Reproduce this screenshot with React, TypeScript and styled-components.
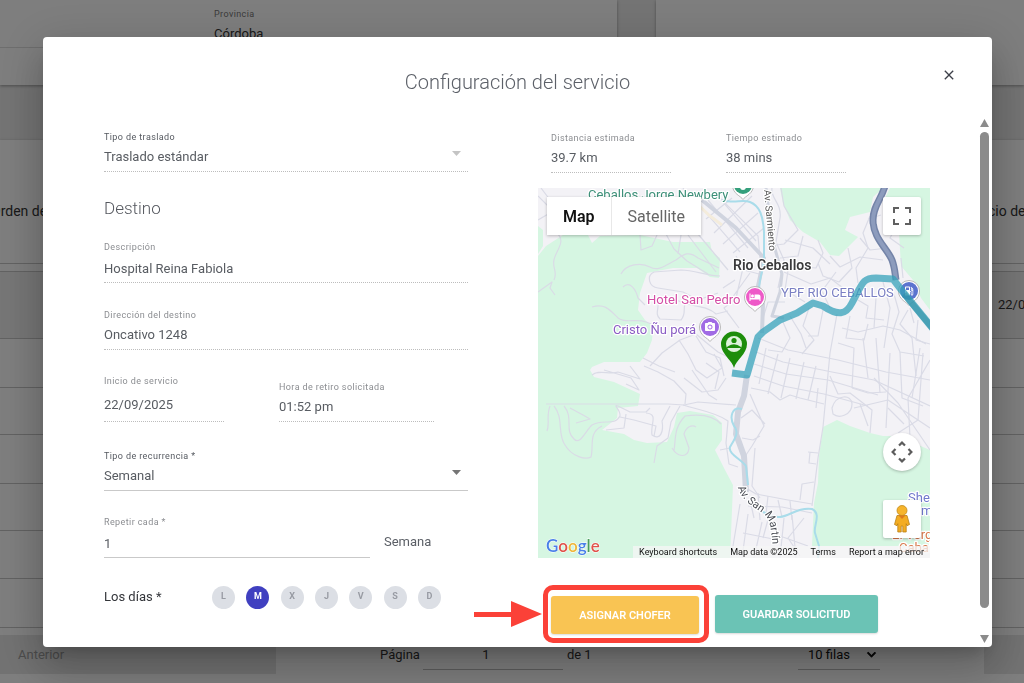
import React from "react";
import styled, { createGlobalStyle, css } from "styled-components";
import { MdClose, MdHotel, MdPhotoCamera, MdLocalGasStation, MdKeyboardArrowDown } from "react-icons/md";

const GlobalStyle = createGlobalStyle`
  *, *::before, *::after { box-sizing: border-box; }
  html, body { margin: 0; padding: 0; }
  body {
    font-family: Roboto, "Liberation Sans", sans-serif;
    font-size: 13px;
    color: #5b5f66;
    background: #e8e8e8;
    overflow: hidden;
  }
  button, input, select { font: inherit; color: inherit; }
`;

/* ---------- page behind the dialog ---------- */

const Page = styled.main`
  display: flex;
  flex-direction: column;
  min-height: 100vh;
  overflow: hidden;
`;

const TopCards = styled.section`
  display: grid;
  grid-template-columns: 617fr 368fr;
  gap: 39px;
  height: 85px;
`;

const Card = styled.div`
  background: #fdfdfd;
  box-shadow: 0 1px 3px rgba(0, 0, 0, 0.35);
`;

const ProvinceCard = styled(Card)`
  padding: 8px 0 0 214px;
  background: linear-gradient(#fdfdfd 47px, #dcdcdc 47px, #dcdcdc 48px, #fdfdfd 48px);
`;

const ProvinceLabel = styled.div`
  font-size: 9px;
  line-height: 12px;
  letter-spacing: 0.4px;
  color: #777;
`;

const ProvinceValue = styled.div`
  margin-top: 4px;
  font-size: 13px;
  line-height: 20px;
  color: #333;
`;

const TableCard = styled(Card)`
  margin-top: 55px;
  flex: 1;
`;

const Orders = styled.table`
  width: calc(100% + 9px);
  margin-left: -9px;
  table-layout: fixed;
  border-collapse: collapse;
  font-size: 14px;
  color: #333;

  th, td {
    padding: 0;
    font-weight: 400;
    text-align: left;
    white-space: nowrap;
    overflow: hidden;
    border-bottom: 1px solid #c4c4c4;
  }
  th { height: 123px; padding-top: 20px; }
  th:last-child { width: 51px; }
  td:last-child { padding-left: 25px; font-size: 13px; }
`;

const OrderRow = styled.tr<{ $h: number; $tint?: boolean }>`
  height: ${(p) => p.$h}px;
  background: ${(p) => (p.$tint ? "#ededed" : "transparent")};
`;

const Pager = styled.footer`
  display: flex;
  align-items: center;
  height: 39px;
  margin: 7px 0 9px;
  font-size: 13px;
  color: #333;
`;

const PagerButton = styled.button<{ $w: number }>`
  width: ${(p) => p.$w}px;
  flex: none;
  height: 39px;
  padding: 0 18px;
  border: 0;
  text-align: left;
  background: #e4e4e4;
  color: #999;
  white-space: nowrap;
  overflow: hidden;
`;

const PagerCenter = styled.div`
  flex: 1;
  display: flex;
  align-items: center;
  padding: 1px 104px 0;
`;

const PagerInput = styled.input`
  width: 140px;
  height: 30px;
  margin: 0 4px 0 3px;
  padding: 0 14px 0 0;
  text-align: center;
  border: 0;
  border-bottom: 1px solid #bbb;
  background: transparent;
`;

const PagerSize = styled.label`
  display: flex;
  align-items: center;
  width: 82px;
  height: 30px;
  margin-left: auto;
  padding-left: 10px;
  border-bottom: 1px solid #bbb;
  color: #111;

  select {
    appearance: none;
    flex: 1;
    min-width: 0;
    padding: 0;
    border: 0;
    background: transparent;
  }
  svg { flex: none; }
  path:last-child { stroke: #000; stroke-width: 1; }
`;

/* ---------- dialog ---------- */

const Backdrop = styled.div`
  position: fixed;
  inset: 0;
  display: flex;
  padding: 37px 32px 36px 43px;
  background: rgba(0, 0, 0, 0.5);
`;

const Dialog = styled.section`
  flex: 1;
  min-width: 0;
  display: flex;
  flex-direction: column;
  background: #fff;
  border-radius: 4px;
  box-shadow: 0 11px 15px -7px rgba(0, 0, 0, 0.2), 0 24px 38px 3px rgba(0, 0, 0, 0.14),
    0 9px 46px 8px rgba(0, 0, 0, 0.12);
`;

const DialogHeader = styled.header`
  display: grid;
  grid-template-columns: 60px 1fr 60px;
  height: 81px;
  padding-top: 26px;
`;

const DialogTitle = styled.h1`
  grid-column: 2;
  margin: 5px 0 0;
  font-size: 20px;
  font-weight: 300;
  line-height: 28px;
  text-align: center;
  color: #5c6068;
`;

const CloseButton = styled.button`
  width: 24px;
  height: 24px;
  margin-left: 5px;
  padding: 4px;
  border: 0;
  background: transparent;
  color: #3d4049;
  font-size: 16px;
  line-height: 0;
`;

const DialogBody = styled.div`
  flex: 1;
  min-height: 0;
  display: flex;
`;

const Form = styled.form`
  flex: 1;
  min-width: 0;
  display: grid;
  grid-template-columns: minmax(0, 364fr) minmax(0, 392fr);
  gap: 70px;
  padding: 13px 47px 0 61px;
`;

const Column = styled.div<{ $top?: number }>`
  display: flex;
  flex-direction: column;
  padding-top: ${(p) => p.$top ?? 0}px;
`;

const ScrollTrack = styled.div`
  flex: none;
  width: 15px;
  display: flex;
  flex-direction: column;
  align-items: center;
  gap: 5px;
  padding: 1px 0 4px;
  color: #8b8b8b;
`;

const ScrollThumb = styled.div`
  width: 9px;
  flex: 1;
  margin-bottom: 22px;
  border-radius: 5px;
  background: #8b8b8b;
`;

const Field = styled.div<{ $gap?: number; $pad?: number; $w?: string; $solid?: boolean }>`
  display: flex;
  flex-direction: column;
  gap: ${(p) => p.$gap ?? 4}px;
  width: ${(p) => p.$w ?? "auto"};
  padding-bottom: ${(p) => p.$pad ?? 4}px;
  border-bottom: 1px ${(p) => (p.$solid ? "solid #c9c9c9" : "dotted #bdbdbd")};
`;

const FieldLabel = styled.label<{ $strong?: boolean }>`
  font-size: 9px;
  line-height: 12px;
  letter-spacing: 0.4px;
  white-space: nowrap;
  color: ${(p) => (p.$strong ? "#555960" : "#8b8d91")};
`;

const control = css`
  width: 100%;
  min-width: 0;
  height: 20px;
  padding: 0;
  border: 0;
  outline: 0;
  background: transparent;
  font-size: 13px;
  line-height: 20px;
  color: #585c62;
`;

const TextInput = styled.input`
  ${control}
`;

const SelectBox = styled.div<{ $muted?: boolean }>`
  display: flex;
  align-items: center;
  padding-right: 7px;
  color: ${(p) => (p.$muted ? "#c4c4c4" : "#757575")};

  select { ${control} appearance: none; opacity: 1; }
  svg { flex: none; margin-bottom: 7px; }
`;

const SectionTitle = styled.h2`
  margin: 24px 0 21px;
  font-size: 17px;
  font-weight: 300;
  line-height: 24px;
  color: #55585f;
`;

const Split = styled.div<{ $gap: number; $top: number }>`
  display: flex;
  align-items: flex-end;
  gap: ${(p) => p.$gap}px;
  margin-top: ${(p) => p.$top}px;
`;

const Spaced = styled.div<{ $top: number }>`
  margin-top: ${(p) => p.$top}px;
`;

const Unit = styled.span`
  height: 26px;
  line-height: 20px;
`;

const Days = styled.fieldset`
  display: flex;
  align-items: center;
  margin: 27px 0 0;
  padding: 0;
  border: 0;
`;

const DaysTitle = styled.span`
  width: 108px;
  flex: none;
  line-height: 24px;
  color: #33353a;
`;

const DayList = styled.div`
  display: flex;
  justify-content: space-between;
  width: 229px;
`;

const Day = styled.button<{ $on?: boolean }>`
  width: 23px;
  height: 23px;
  padding: 0 0 2px;
  border: 0;
  border-radius: 50%;
  font-size: 9px;
  font-weight: 700;
  line-height: 20px;
  text-align: center;
  background: ${(p) => (p.$on ? "#4040c0" : "#dcdfe5")};
  color: ${(p) => (p.$on ? "#fff" : "#989ba3")};
`;

const Estimates = styled.div`
  display: flex;
  gap: 55px;
  padding: 0 13px;
`;

const Actions = styled.div`
  display: flex;
  align-items: center;
  gap: 6px;
  margin: 27px 0 0 5px;
`;

const Highlight = styled.div`
  position: relative;
  padding: 6px 5px 4px 3px;
  border: 5px solid #fb4138;
  border-radius: 10px;
`;

const Arrow = styled.svg`
  position: absolute;
  right: calc(100% + 6px);
  top: 10px;
`;

const ActionButton = styled.button<{ $w: number; $bg: string }>`
  display: block;
  width: ${(p) => p.$w}px;
  height: 38px;
  padding: 0;
  border: 0;
  border-radius: 3px;
  background: ${(p) => p.$bg};
  box-shadow: 0 1px 2px rgba(0, 0, 0, 0.15);
  color: #fff;
  font-size: 11px;
  font-weight: 600;
  white-space: nowrap;
`;

/* ---------- map ---------- */

const MapFrame = styled.div`
  position: relative;
  height: 370px;
  margin-top: 15px;
  overflow: hidden;
  background: #f3f2f6;
`;

const MapDrawing = styled.svg`
  display: block;
  width: 100%;
  height: 370px;
`;

const MapTypes = styled.div`
  position: absolute;
  left: 9px;
  top: 9px;
  display: flex;
  background: #fff;
  box-shadow: 0 1px 3px rgba(0, 0, 0, 0.25);
`;

const MapType = styled.button<{ $on?: boolean }>`
  height: 38px;
  padding: 0 16px;
  border: 0;
  border-left: ${(p) => (p.$on ? "0" : "1px solid #e8e8e8")};
  background: transparent;
  font-size: 16px;
  font-weight: ${(p) => (p.$on ? 600 : 400)};
  color: ${(p) => (p.$on ? "#111" : "#666")};
`;

const MapControls = styled.div`
  position: absolute;
  right: 9px;
  top: 9px;
  bottom: 20px;
  width: 38px;
  display: flex;
  flex-direction: column;
  gap: 29px;
`;

const MapControl = styled.button<{ $round?: boolean }>`
  display: grid;
  place-items: center;
  width: 38px;
  height: 38px;
  padding: 0;
  border: 0;
  border-radius: ${(p) => (p.$round ? "50%" : "2px")};
  background: #fff;
  box-shadow: 0 1px 3px rgba(0, 0, 0, 0.25);
  &:nth-child(2) { margin-top: auto; }
`;

const MapLegal = styled.div`
  position: absolute;
  right: 0;
  bottom: 0;
  display: flex;
  gap: 13px;
  padding: 0 6px;
  background: rgba(245, 245, 245, 0.75);
  font-size: 9px;
  line-height: 12px;
  color: #111;
  white-space: nowrap;

  a { color: inherit; text-decoration: none; }
  button { padding: 0; border: 0; background: none; line-height: 12px; }
`;

const Caret = () => (
  <svg width="9" height="5" viewBox="0 0 9 5" aria-hidden="true">
    <path d="M0 0h9L4.500 5z" fill="currentColor" />
  </svg>
);

const pinPath = "M0 14.500 C-2 11 -10.500 9 -10.500 0 A10.500 10.500 0 1 1 10.500 0 C10.500 9 2 11 0 14.500z";

const Poi = ({ x, y, color, icon }: { x: number; y: number; color: string; icon?: React.ReactNode }) => (
  <g transform={`translate(${x} ${y})`}>
    <path d={pinPath} fill="#fff" stroke="#aaa" strokeWidth=".8" />
    <circle r="9" fill={color} />
    {icon}
  </g>
);

const greens = [
  "M0 68 L8 58 L25 47 L50 47 L54 55 L62 48 L102 47 L135 54 L172 54 L174 64 L182 70 L181 90 L172 89 L159 80 L135 80 L109 85 L102 105 L100 122 L107 132 L115 139 L114 152 L109 165 L102 174 L66 174 L54 179 L52 182 L56 189 L76 194 L102 206 L100 218 L80 220 L79 230 L64 242 L86 246 L96 252 L109 255 L129 254 L136 239 L139 225 L152 223 L175 227 L184 235 L184 252 L177 262 L187 282 L195 297 L194 322 L192 370 L0 370z",
  "M0 38 L5 42 L5 58 L0 66z",
  "M242 0 L245 15 L252 32 L265 44 L282 54 L292 67 L301 68 L309 60 L320 49 L307 42 L312 29 L332 24 L335 9 L345 0z",
  "M352 0 H392 V122 L383 110 L375 92 L363 78 L361 45 L350 28 L346 12z",
  "M285 239 L299 232 L312 238 L332 245 L345 248 L359 248 L392 262 V358 L274 358 L276 315 L280 295 L281 268z",
];

const roads = [
  // hills on the west side
  "M0 8 L14 22 L30 16 M3 0 L24 28 L17 45 M20 46 C28 54 17 64 16 72 C14 80 20 84 16 92 M0 104 L14 94 L12 100 L17 107",
  "M83 86 C88 76 103 74 112 79 C120 84 128 77 138 72 C145 67 150 62 160 70 L181 80",
  "M85 99 C92 92 98 102 100 110 L107 117 M54 119 C67 115 72 122 80 130 C88 136 98 130 108 134 L119 138",
  "M102 47 L103 62 L114 58 L119 47 M128 46 L136 61 L149 73 L170 86 M143 47 L140 66 M150 47 L178 84 M160 46 L190 82",
  "M182 88 C170 88 156 82 143 82 L116 84 C108 88 111 99 120 100 L145 104 L160 112 L180 105",
  "M120 110 C122 119 116 126 122 131 L143 132 C150 124 142 118 151 112 M135 110 C150 120 168 116 178 126 L190 123",
  "M112 178 L124 165 L142 152 L158 146 L170 156 L180 164 L192 170 M106 178 L120 184 L136 193 L148 206 L147 216",
  "M54 187 C60 181 72 187 80 184 L102 191 L92 178 M66 182 L93 190 L101 202 L88 196 M105 170 L121 178 L137 184",
  "M141 152 L150 166 L158 182 L169 190 L184 180 L176 166 M158 148 L168 164 L182 170 L186 188",
  "M146 190 L164 204 L180 202 L188 190 M154 182 L171 207 L179 212 M168 175 L181 184 L177 201",
  "M8 216 L130 216 L146 217 L160 214 L198 217 M12 218 C8 228 12 236 9 243 M16 218 C26 230 19 246 27 257 C34 269 48 272 53 269 C56 258 50 245 64 238",
  "M26 218 C36 230 26 242 36 251 C42 258 48 242 54 237 C66 230 76 239 82 228 C83 222 74 216 80 218",
  "M32 220 L45 227 L52 231 L38 235 M80 218 L92 224 L108 224 L112 220 M82 229 L96 232 L118 238 L116 248",
  "M132 218 L124 233 C126 244 122 253 114 247 C112 236 121 226 108 225 M88 226 L86 240 L68 242 M142 218 L133 234 L130 250 L119 258 L116 275",
  "M134 260 C140 270 150 270 151 260 L146 246 C148 239 154 236 158 239 M136 263 C138 248 136 240 147 228 C160 226 174 226 183 236",
  "M145 217 C160 222 178 224 190 233 L188 255 L191 276 L200 279 M182 262 L192 260",
  // town centre
  "M164 20 L202 64 M170 12 L210 60 M180 8 L218 53 M176 45 L214 8 M168 31 L194 10 M185 56 L220 25 M195 65 L226 40",
  "M180 8 L220 48 L222 70 M198 68 L206 82 L221 86 M205 80 L198 110 L186 120 L201 140 M185 100 L197 92 M212 85 L194 110",
  "M234 0 C232 10 244 15 242 30 L238 54 L246 72 L240 100 M243 0 L246 18 L260 42 L246 56 L230 58 M247 52 L275 60 L292 76 M265 48 L260 68 L242 70",
  "M280 52 L285 65 L278 80 L255 78 M292 68 L302 79 L322 69 L345 72 M310 60 L314 80 L301 94 L285 88 L280 75 M322 50 L332 62 L350 60",
  "M332 28 L325 45 L330 60 L318 80 L320 95 M343 27 L330 31 M360 35 L352 50 L366 60 M363 70 L365 90",
  "M246 84 L273 96 L292 90 L310 104 M252 70 L247 102 L267 114 M225 130 L230 114 L247 114 M298 84 L284 103 L292 120",
  "M245 134 L252 150 L244 164 L230 162 M252 128 L263 146 L268 160 M271 120 L265 138 L276 152 L264 166 M285 122 L280 148 L270 148",
  "M299 126 L292 165 L285 239 L280 270 L274 318 M220 150 L250 162 L300 172 L348 184 L392 192 M218 164 L245 174 L294 184 L336 192 L392 218",
  "M216 176 L248 186 L290 192 L340 207 M216 188 L245 198 L286 206 L330 218 M213 200 L232 204 L242 212 L252 207 L262 210 L286 216",
  "M240 166 L230 206 M252 170 L243 210 M266 174 L258 211 M278 178 L270 212 M228 160 L221 196",
  "M304 140 L320 144 L345 138 L362 142 L388 156 M312 128 L308 150 L326 152 L330 136 M338 110 L336 140 M345 94 L352 120 L346 160",
  "M320 112 L330 118 L328 130 L346 132 M356 106 L361 124 L354 146 L362 164 L386 168 M370 122 L362 136 L374 150 L378 188 M380 132 L378 152 L392 156",
  "M300 155 L316 160 L314 200 M325 150 L330 190 M338 150 L342 205 M352 165 L348 240 M362 164 L364 210 L385 218 M382 160 L374 210",
  "M292 188 L300 206 L312 205 L334 222 L332 245 M314 200 L330 205 L348 204 M316 220 L350 212 L392 240 M336 190 L360 215 L392 262 M322 216 L330 238",
  "M392 172 L370 210 L372 250 M385 165 L380 232 L360 245 M350 220 L366 236",
  "M294 220 C298 206 314 206 314 216 C314 227 301 231 295 226z",
  // south
  "M212 206 L226 238 L214 258 L206 270 M203 230 L214 222 L227 236 M204 250 L215 252 L222 248 M217 260 L214 298 L222 310",
  "M270 264 L280 265 M272 264 L271 275 L278 276 M262 312 L264 296 L276 294 M208 300 L218 306 L250 312 L274 316 M210 318 L244 319 L274 325",
  "M212 312 L216 330 M220 305 L222 332 M230 308 L228 326 M240 312 L244 329 M252 313 L254 332 M202 316 L198 340 L193 370 M210 326 L204 370",
  "M224 334 L216 370 M231 328 L225 350 M246 330 L242 370 M254 327 L258 370 M266 330 L250 350 L262 368 M242 348 L270 358 M205 345 L240 352",
  "M372 120 L376 135 M0 32 L12 25 M145 0 L160 24 M280 200 L278 220",
];

const water = [
  "M184 12 C196 16 204 11 212 14 C222 18 225 28 226 44 L226 70 C226 80 222 87 221 100",
  "M204 221 C194 218 191 229 196 238 C202 244 196 252 192 259 C190 266 203 271 208 278 L210 297",
  "M214 316 C225 324 232 330 242 329 C252 328 260 319 274 321 C284 326 275 338 277 345 L281 358 L280 370",
];

const Map = () => (
  <MapFrame>
    <MapDrawing viewBox="0 0 392 370" preserveAspectRatio="xMidYMid slice" aria-label="Recorrido del traslado">
      <g fill="#d6f6e2">
        {greens.map((d) => (
          <path key={d} d={d} />
        ))}
      </g>
      <g fill="none" stroke="#dadbe6" strokeWidth="1.200" strokeLinejoin="round">
        {roads.map((d) => (
          <path key={d} d={d} />
        ))}
      </g>
      <g fill="none" stroke="#d0d4df" strokeWidth="4" strokeLinejoin="round">
        <path d="M164 12 L198 40 L226 70 L220 98 L225 116 L224 145" />
        <path d="M228 0 L234 50 L244 86 L242 104 L234 128 L246 130" strokeWidth="3" />
        <path d="M209 187 L206 208 L200 224 L198 246 L206 268 L208 304" strokeWidth="6" />
      </g>
      <path d="M155 12 L172 28 L184 37" fill="none" stroke="#f4ecdc" strokeWidth="3" />
      <g fill="none" stroke="#a9dcea" strokeWidth="2">
        {water.map((d) => (
          <path key={d} d={d} />
        ))}
      </g>
      <path d="M347 -2 C343 12 335 18 335 32 C335 50 349 60 354 72 C357 80 357 86 358 92" fill="none" stroke="#7484a8" strokeWidth="7" />
      <path d="M347 -2 C343 12 335 18 335 32 C335 50 349 60 354 72 C357 80 357 86 358 92" fill="none" stroke="#8d9cbd" strokeWidth="4" />

      <Poi x={205} y={-3} color="#35a07c" />
      <circle cx="205" cy="-1" r="3" fill="#fff" />
      <Poi x={217} y={109} color="#ee5ac8" icon={<MdHotel x={-6} y={-6} size={12} color="#fff" />} />
      <Poi x={172} y={139} color="#a06be4" icon={<MdPhotoCamera x={-6} y={-6} size={12} color="#fff" />} />
      <Poi x={371} y={103} color="#5c74cf" icon={<MdLocalGasStation x={-6} y={-6} size={12} color="#fff" />} />

      <g fontSize="13" stroke="#fff" strokeWidth="2.500" strokeLinejoin="round" paintOrder="stroke">
        <text x="50" y="11" fill="#3d9079">Ceballos Jorge Newbery</text>
        <text x="195" y="82" fontSize="14" fontWeight="600" fill="#3a3a3c">Rio Ceballos</text>
        <text x="109" y="116" fill="#d44ea6">Hotel San Pedro</text>
        <text x="75" y="146" fill="#8a5cc4">Cristo Ñu porá</text>
        <text x="243" y="109" fill="#7b80c4">YPF RIO CEBALLOS</text>
        <text x="370" y="314" fill="#6f78cc">She</text>
        <text x="383" y="327" fill="#6f78cc">m</text>
        <text x="354" y="351" fill="#d87a4c">El Verg</text>
        <text x="361" y="364" fill="#d87a4c">Cabal</text>
        <text transform="translate(226 2) rotate(85)" fontSize="10" fill="#555">Av. Sarmiento</text>
        <path id="san-martin" d="M200 299 C203 312 214 318 224 325 C234 332 233 345 235 362" fill="none" stroke="none" />
        <text fontSize="11" fill="#4a4d55">
          <textPath href="#san-martin">Av. San Martín</textPath>
        </text>
      </g>

      <path
        d="M194 185 L209 187 L220 149 L225 144 L242 132 L259 125 L275 115 L285 118 C300 128 308 127 314 115 C325 94 325 90 338 90 L355 91 L365 104 L396 142"
        fill="none" stroke="#36a2ba" strokeOpacity=".75" strokeWidth="7" strokeLinejoin="round"
      />
      <path d="M366 106 L396 142" fill="none" stroke="#2c8ca4" strokeOpacity=".5" strokeWidth="6" />

      <path d="M196 180 C194 172 183 166 183 156 A13 12.500 0 0 1 209 156 C209 166 198 172 196 180z" fill="#1d8d0b" />
      <circle cx="196" cy="156" r="8" fill="#dff3dc" />
      <circle cx="196" cy="152.500" r="2.600" fill="#1d8d0b" />
      <path d="M189 159 Q196 153.500 203 159 V160 H189z" fill="#1d8d0b" />

      <text x="8" y="364" fontFamily="Lato, sans-serif" fontSize="17" fontWeight="600" stroke="#fff" strokeWidth="1" paintOrder="stroke">
        <tspan fill="#4a80e8">G</tspan>
        <tspan fill="#e0524a">o</tspan>
        <tspan fill="#efb73a">o</tspan>
        <tspan fill="#4a80e8">g</tspan>
        <tspan fill="#4a9f5c">l</tspan>
        <tspan fill="#e0524a">e</tspan>
      </text>
    </MapDrawing>

    <MapTypes>
      <MapType type="button" $on>Map</MapType>
      <MapType type="button">Satellite</MapType>
    </MapTypes>

    <MapControls>
      <MapControl type="button" aria-label="Pantalla completa">
        <svg width="18" height="18" viewBox="0 0 18 18" fill="none" stroke="#606060" strokeWidth="2">
          <path d="M1 6V1H6M12 1h5V6M17 12v5H12M6 17H1V12" />
        </svg>
      </MapControl>
      <MapControl type="button" $round aria-label="Controles de cámara">
        <svg width="22" height="22" viewBox="0 0 22 22" fill="none" stroke="#5c5c5c" strokeWidth="2.200">
          <path d="M8 4.500 11 1.600l3 2.900M8 17.500l3 2.900 3-2.900M4.500 8 1.600 11l2.900 3M17.500 8l2.900 3-2.900 3" />
        </svg>
      </MapControl>
      <MapControl type="button" aria-label="Street View">
        <svg width="18" height="30" viewBox="0 0 18 30">
          <path d="M4 11.500h10l2.500 9-2.500 1.200-.8-2V28h-3.400v-6H8.200v6H4.800v-8.300l-.8 2-2.500-1.200z" fill="#f3ac22" stroke="#b98018" strokeWidth=".8" />
          <circle cx="9" cy="6.500" r="5" fill="#f6b42c" stroke="#c28a1c" strokeWidth=".8" />
          <path d="M5.500 11.500 9 15l3.500-3.500z" fill="#dd7a1c" />
        </svg>
      </MapControl>
    </MapControls>

    <MapLegal>
      <button type="button">Keyboard shortcuts</button>
      <span>Map data ©2025</span>
      <a href="#terms">Terms</a>
      <a href="#report">Report a map error</a>
    </MapLegal>
  </MapFrame>
);

const days = ["L", "M", "X", "J", "V", "S", "D"];
const rowHeights = [49, 47, 49, 47, 48, 49];

export default function App() {
  return (
    <>
      <GlobalStyle />
      <Page>
        <TopCards>
          <ProvinceCard>
            <ProvinceLabel>Provincia</ProvinceLabel>
            <ProvinceValue>Córdoba</ProvinceValue>
          </ProvinceCard>
          <Card />
        </TopCards>
        <TableCard>
          <Orders>
            <thead>
              <tr>
                <th>Orden de</th>
                <th>Inicio de</th>
              </tr>
            </thead>
            <tbody>
              <OrderRow $h={8}><td colSpan={2} /></OrderRow>
              <OrderRow $h={67} $tint>
                <td />
                <td>22/09</td>
              </OrderRow>
              {rowHeights.map((h, i) => (
                <OrderRow key={i} $h={h}>
                  <td />
                  <td />
                </OrderRow>
              ))}
            </tbody>
          </Orders>
          <Pager>
            <PagerButton type="button" $w={276}>Anterior</PagerButton>
            <PagerCenter>
              <label htmlFor="page">Página</label>
              <PagerInput id="page" defaultValue="1" />
              <span>de 1</span>
              <PagerSize>
                <select aria-label="Filas por página">
                  <option>10 filas</option>
                </select>
                <MdKeyboardArrowDown size={17} />
              </PagerSize>
            </PagerCenter>
            <PagerButton type="button" $w={40} aria-label="Siguiente" />
          </Pager>
        </TableCard>
      </Page>

      <Backdrop>
        <Dialog role="dialog" aria-labelledby="dialog-title">
          <DialogHeader>
            <DialogTitle id="dialog-title">Configuración del servicio</DialogTitle>
            <CloseButton type="button" aria-label="Cerrar">
              <MdClose />
            </CloseButton>
          </DialogHeader>
          <DialogBody>
            <Form>
              <Column>
                <Field>
                  <FieldLabel htmlFor="transfer" $strong>Tipo de traslado</FieldLabel>
                  <SelectBox $muted>
                    <select id="transfer"><option>Traslado estándar</option></select>
                    <Caret />
                  </SelectBox>
                </Field>

                <SectionTitle>Destino</SectionTitle>

                <Field $gap={6} $pad={3}>
                  <FieldLabel htmlFor="description">Descripción</FieldLabel>
                  <TextInput id="description" defaultValue="Hospital Reina Fabiola" />
                </Field>

                <Spaced $top={26}>
                  <Field>
                    <FieldLabel htmlFor="address">Dirección del destino</FieldLabel>
                    <TextInput id="address" defaultValue="Oncativo 1248" />
                  </Field>
                </Spaced>

                <Split $gap={55} $top={25}>
                  <Field $gap={8} $pad={6} $w="120px">
                    <FieldLabel htmlFor="start">Inicio de servicio</FieldLabel>
                    <TextInput id="start" defaultValue="22/09/2025" />
                  </Field>
                  <Field $w="155px">
                    <FieldLabel htmlFor="pickup">Hora de retiro solicitada</FieldLabel>
                    <TextInput id="pickup" defaultValue="01:52 pm" />
                  </Field>
                </Split>

                <Spaced $top={28}>
                  <Field $solid>
                    <FieldLabel htmlFor="recurrence" $strong>Tipo de recurrencia *</FieldLabel>
                    <SelectBox>
                      <select id="recurrence"><option>Semanal</option></select>
                      <Caret />
                    </SelectBox>
                  </Field>
                </Spaced>

                <Split $gap={14} $top={25}>
                  <Field $gap={6} $pad={3} $w="266px" $solid>
                    <FieldLabel htmlFor="repeat">Repetir cada *</FieldLabel>
                    <TextInput id="repeat" defaultValue="1" />
                  </Field>
                  <Unit>Semana</Unit>
                </Split>

                <Days>
                  <DaysTitle>Los días *</DaysTitle>
                  <DayList>
                    {days.map((d) => (
                      <Day key={d} type="button" $on={d === "M"}>{d}</Day>
                    ))}
                  </DayList>
                </Days>
              </Column>

              <Column $top={1}>
                <Estimates>
                  <Field $w="120px">
                    <FieldLabel htmlFor="distance">Distancia estimada</FieldLabel>
                    <TextInput id="distance" defaultValue="39.7 km" />
                  </Field>
                  <Field $w="120px">
                    <FieldLabel htmlFor="time">Tiempo estimado</FieldLabel>
                    <TextInput id="time" defaultValue="38 mins" />
                  </Field>
                </Estimates>
                <Map />
                <Actions>
                  <Highlight>
                    <Arrow width="68" height="28" viewBox="0 0 68 28" fill="#fb4138" aria-hidden="true">
                      <path d="M0 12h37V1l31 13-31 13V17H0z" />
                    </Arrow>
                    <ActionButton type="button" $w={148} $bg="#f9c453">ASIGNAR CHOFER</ActionButton>
                  </Highlight>
                  <ActionButton type="button" $w={163} $bg="#6bc3b5">GUARDAR SOLICITUD</ActionButton>
                </Actions>
              </Column>
            </Form>
            <ScrollTrack aria-hidden="true">
              <svg width="9" height="8" viewBox="0 0 9 8"><path d="M4.500 0 9 8H0z" fill="currentColor" /></svg>
              <ScrollThumb />
              <svg width="9" height="8" viewBox="0 0 9 8"><path d="M4.500 8 0 0h9z" fill="currentColor" /></svg>
            </ScrollTrack>
          </DialogBody>
        </Dialog>
      </Backdrop>
    </>
  );
}
